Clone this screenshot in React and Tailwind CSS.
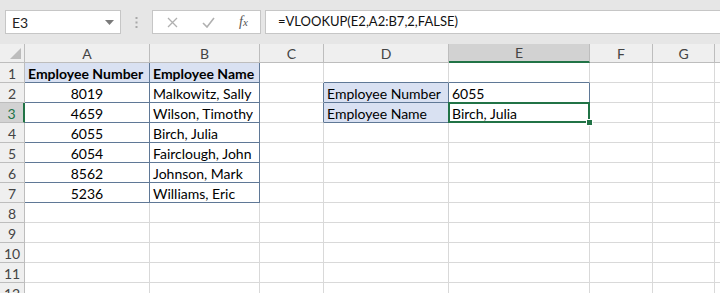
import React from 'react'

const cols = ['A', 'B', 'C', 'D', 'E', 'F', 'G', 'H']

const tableA = [
  ['8019', 'Malkowitz, Sally'],
  ['4659', 'Wilson, Timothy'],
  ['6055', 'Birch, Julia'],
  ['6054', 'Fairclough, John'],
  ['8562', 'Johnson, Mark'],
  ['5236', 'Williams, Eric'],
]

function cellInfo(r, c) {
  const info = { text: '', bold: false, align: 'left', fill: '', rightSlate: false, bottomSlate: false }
  const inTable = r >= 1 && r <= 7 && (c === 'A' || c === 'B')
  const inLookup = (r === 2 || r === 3) && (c === 'D' || c === 'E')
  if (inTable) {
    info.rightSlate = true
    info.bottomSlate = true
    if (r === 1) {
      info.text = c === 'A' ? 'Employee Number' : 'Employee Name'
      info.bold = true
      info.fill = 'bg-[#d9e1f2]'
    } else {
      const row = tableA[r - 2]
      info.text = c === 'A' ? row[0] : row[1]
      info.align = c === 'A' ? 'center' : 'left'
    }
  }
  if (inLookup) {
    info.rightSlate = true
    info.bottomSlate = true
    if (c === 'D') {
      info.fill = 'bg-[#d9e1f2]'
      info.text = r === 2 ? 'Employee Number' : 'Employee Name'
    } else {
      info.text = r === 2 ? '6055' : 'Birch, Julia'
    }
  }
  // neighbours that close the lookup box
  if (r === 1 && (c === 'D' || c === 'E')) info.bottomSlate = true
  if ((r === 2 || r === 3) && c === 'C') info.rightSlate = true
  return info
}

function Cell({ r, c }) {
  const i = cellInfo(r, c)
  const active = r === 3 && c === 'E'
  return (
    <div
      className={`relative h-5 border-r border-b flex items-center overflow-visible whitespace-nowrap px-[3px] pt-px ${i.fill} ${
        i.rightSlate ? 'border-r-[#5f7896]' : 'border-r-[#d9d9d9]'
      } ${i.bottomSlate ? 'border-b-[#5f7896]' : 'border-b-[#d9d9d9]'} ${
        i.align === 'center' ? 'justify-center' : 'justify-start'
      } ${i.bold ? 'font-bold' : ''} ${active ? 'z-10' : ''}`}
    >
      {i.text}
      {active && (
        <div className="absolute -left-px -top-px -right-px -bottom-px border-2 border-[#217346] pointer-events-none">
          <div className="absolute -right-[5px] -bottom-[5px] w-[7px] h-[7px] bg-[#217346] border border-white" />
        </div>
      )}
    </div>
  )
}

function Toolbar() {
  return (
    <div className="h-11 bg-[#e6e6e6] flex items-center pl-[5px]">
      {/* name box */}
      <div className="w-[116px] h-6 bg-white border border-[#c6c6c6] flex items-center justify-between pl-[6px] pr-[6px]">
        <span className="text-[14px] text-[#222]">E3</span>
        <svg width="9" height="5" viewBox="0 0 9 5">
          <path d="M0 0h9L4.5 5z" fill="#7a7a7a" />
        </svg>
      </div>
      {/* grip dots */}
      <div className="w-[31px] flex justify-center">
        <svg width="3" height="11" viewBox="0 0 3 11">
          <rect x="0.5" y="0" width="2" height="2" fill="#a8a8a8" />
          <rect x="0.5" y="4.5" width="2" height="2" fill="#a8a8a8" />
          <rect x="0.5" y="9" width="2" height="2" fill="#a8a8a8" />
        </svg>
      </div>
      {/* cancel / enter / insert function */}
      <div className="w-[109px] h-6 bg-white border border-[#c6c6c6] flex items-center">
        <div className="w-[37px] flex justify-center pl-[2px]">
          <svg width="11" height="11" viewBox="0 0 11 11">
            <path d="M1 1l9 9M10 1l-9 9" stroke="#b0b0b0" strokeWidth="1.3" />
          </svg>
        </div>
        <div className="w-[37px] flex justify-center">
          <svg width="13" height="11" viewBox="0 0 13 11">
            <path d="M1 6l4 4L12 1" stroke="#b0b0b0" strokeWidth="1.6" fill="none" />
          </svg>
        </div>
        <div className="w-[33px] flex justify-center">
          <span className="font-['Liberation_Serif',serif] italic text-[14px] text-[#555] leading-none">
            f<span className="text-[11px]">x</span>
          </span>
        </div>
      </div>
      <div className="w-1" />
      {/* formula */}
      <div className="flex-1 h-6 bg-white border border-[#c6c6c6] border-r-0 flex items-center pl-3">
        <span className="text-[13px] text-[#111]">=VLOOKUP(E2,A2:B7,2,FALSE)</span>
      </div>
    </div>
  )
}

export default function App() {
  const rows = Array.from({ length: 12 }, (_, k) => k + 1)
  return (
    <div className="w-[720px] h-[293px] overflow-hidden bg-white font-['Lato','Liberation_Sans',sans-serif] text-[14px] text-black">
      <Toolbar />
      <div className="grid grid-cols-[25px_125px_110px_64px_125px_141px_63px_62px_1fr]">
        {/* corner */}
        <div className="h-[19px] bg-[#efefef] border-r border-b border-[#bdbdbd] flex items-end justify-end pr-[3px] pb-[3px]">
          <svg width="11" height="11" viewBox="0 0 11 11">
            <path d="M11 0V11H0z" fill="#bcbcbc" />
          </svg>
        </div>
        {cols.map((c) => (
          <div
            key={c}
            className={`h-[19px] border-r flex items-center justify-center text-[14px] ${
              c === 'E'
                ? 'bg-[#d2d2d2] border-b-2 border-b-[#217346] border-r-[#bdbdbd] text-[#444]'
                : 'bg-[#efefef] border-b border-[#bdbdbd] text-[#444]'
            }`}
          >
            {c === 'H' ? '' : c}
          </div>
        ))}
        {rows.map((r) => (
          <React.Fragment key={r}>
            <div
              className={`h-5 border-b flex items-center justify-center text-[14px] pt-px ${
                r === 3
                  ? 'bg-[#d2d2d2] text-[#217346] border-r-2 border-r-[#217346] border-b-[#bdbdbd]'
                  : 'bg-[#efefef] text-[#444] border-r border-[#bdbdbd]'
              }`}
            >
              {r}
            </div>
            {cols.map((c) => (
              <Cell key={c} r={r} c={c} />
            ))}
          </React.Fragment>
        ))}
      </div>
    </div>
  )
}
